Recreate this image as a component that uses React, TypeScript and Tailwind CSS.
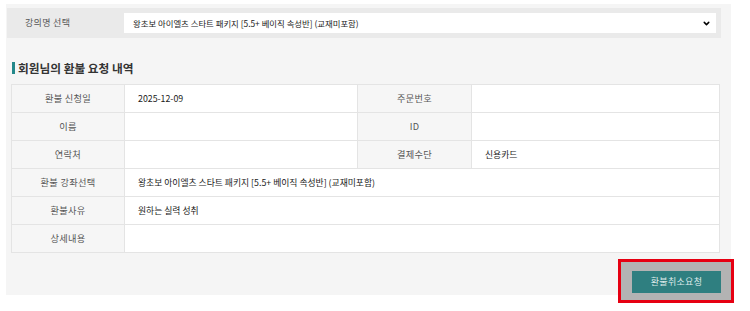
import { ChevronDown } from 'lucide-react'

const font = { fontFamily: '"Noto Sans CJK KR", "Noto Sans", sans-serif' }

type Cell = { label: string; value?: string; label2?: string; value2?: string }

const rows: Cell[] = [
  { label: '환불 신청일', value: '2025-12-09', label2: '주문번호', value2: '' },
  { label: '이름', value: '', label2: 'ID', value2: '' },
  { label: '연락처', value: '', label2: '결제수단', value2: '신용카드' },
  { label: '환불 강좌선택', value: '왕초보 아이엘츠 스타트 패키지 [5.5+ 베이직 속성반] (교재미포함)' },
  { label: '환불사유', value: '원하는 실력 성취' },
  { label: '상세내용', value: '' },
]

export default function App() {
  return (
    <div className="w-[750px] h-[311px] bg-white pt-[4px] pl-[6px]" style={font}>
      <div className="w-[725px] h-[291px] bg-[#f5f5f5] pt-[4px] pl-[1px]">
        {/* course select */}
        <div className="w-[714px] h-[30px] bg-[#eaeaea] flex items-center">
          <div className="w-[117px] pl-[18px] text-[9px] tracking-[0.3px] text-[#555]">강의명 선택</div>
          <div className="w-[592px] h-[20px] bg-white flex items-center justify-between pl-[9px] pr-[5px] text-[8.4px] text-[#1a1a1a]">
            <span>왕초보 아이엘츠 스타트 패키지 [5.5+ 베이직 속성반] (교재미포함)</span>
            <ChevronDown className="w-[9px] h-[9px] text-black" strokeWidth={4} />
          </div>
        </div>

        {/* title */}
        <div className="mt-[24px] pl-[5px] h-[12px] flex items-center gap-[3px]">
          <span className="w-[3px] h-[12px] bg-[#24888a]" />
          <span className="text-[11.7px] font-bold text-[#333] leading-none">회원님의 환불 요청 내역</span>
        </div>

        {/* table */}
        <div className="mt-[10px] ml-[4px] w-[709px] border-t border-l border-[#e4e4e4] grid grid-cols-[113px_233px_114px_1fr]">
          {rows.map((r) => (
            <div key={r.label} className="contents">
              <div className="h-[28px] flex items-center justify-center bg-[#f6f6f6] border-r border-b border-[#e4e4e4] text-[9.2px] tracking-[0.3px] text-[#555]">
                {r.label}
              </div>
              {r.label2 !== undefined ? (
                <>
                  <div className="h-[28px] flex items-center pl-[13px] bg-white border-r border-b border-[#e4e4e4] text-[8.8px] text-[#1a1a1a]">
                    {r.value}
                  </div>
                  <div className="h-[28px] flex items-center justify-center bg-[#f6f6f6] border-r border-b border-[#e4e4e4] text-[9.2px] tracking-[0.3px] text-[#555]">
                    {r.label2}
                  </div>
                  <div className="h-[28px] flex items-center pl-[13px] bg-white border-r border-b border-[#e4e4e4] text-[8.8px] text-[#1a1a1a]">
                    {r.value2}
                  </div>
                </>
              ) : (
                <div className="col-span-3 h-[28px] flex items-center pl-[13px] bg-white border-r border-b border-[#e4e4e4] text-[8.8px] text-[#1a1a1a]">
                  {r.value}
                </div>
              )}
            </div>
          ))}
        </div>

        {/* button */}
        <div className="mt-[13px] flex justify-end pr-[10px]">
          <div className="relative">
            <span className="absolute -left-[14px] -right-[13px] -top-[7px] -bottom-[10px] border-[3px] border-[#e60012] bg-[#b3b3b3]" />
            <button className="relative w-[89px] h-[22px] bg-[#2f7f80] text-[#dfeaea] text-[9px] tracking-[0.3px]">
              환불취소요청
            </button>
          </div>
        </div>
      </div>
    </div>
  )
}
